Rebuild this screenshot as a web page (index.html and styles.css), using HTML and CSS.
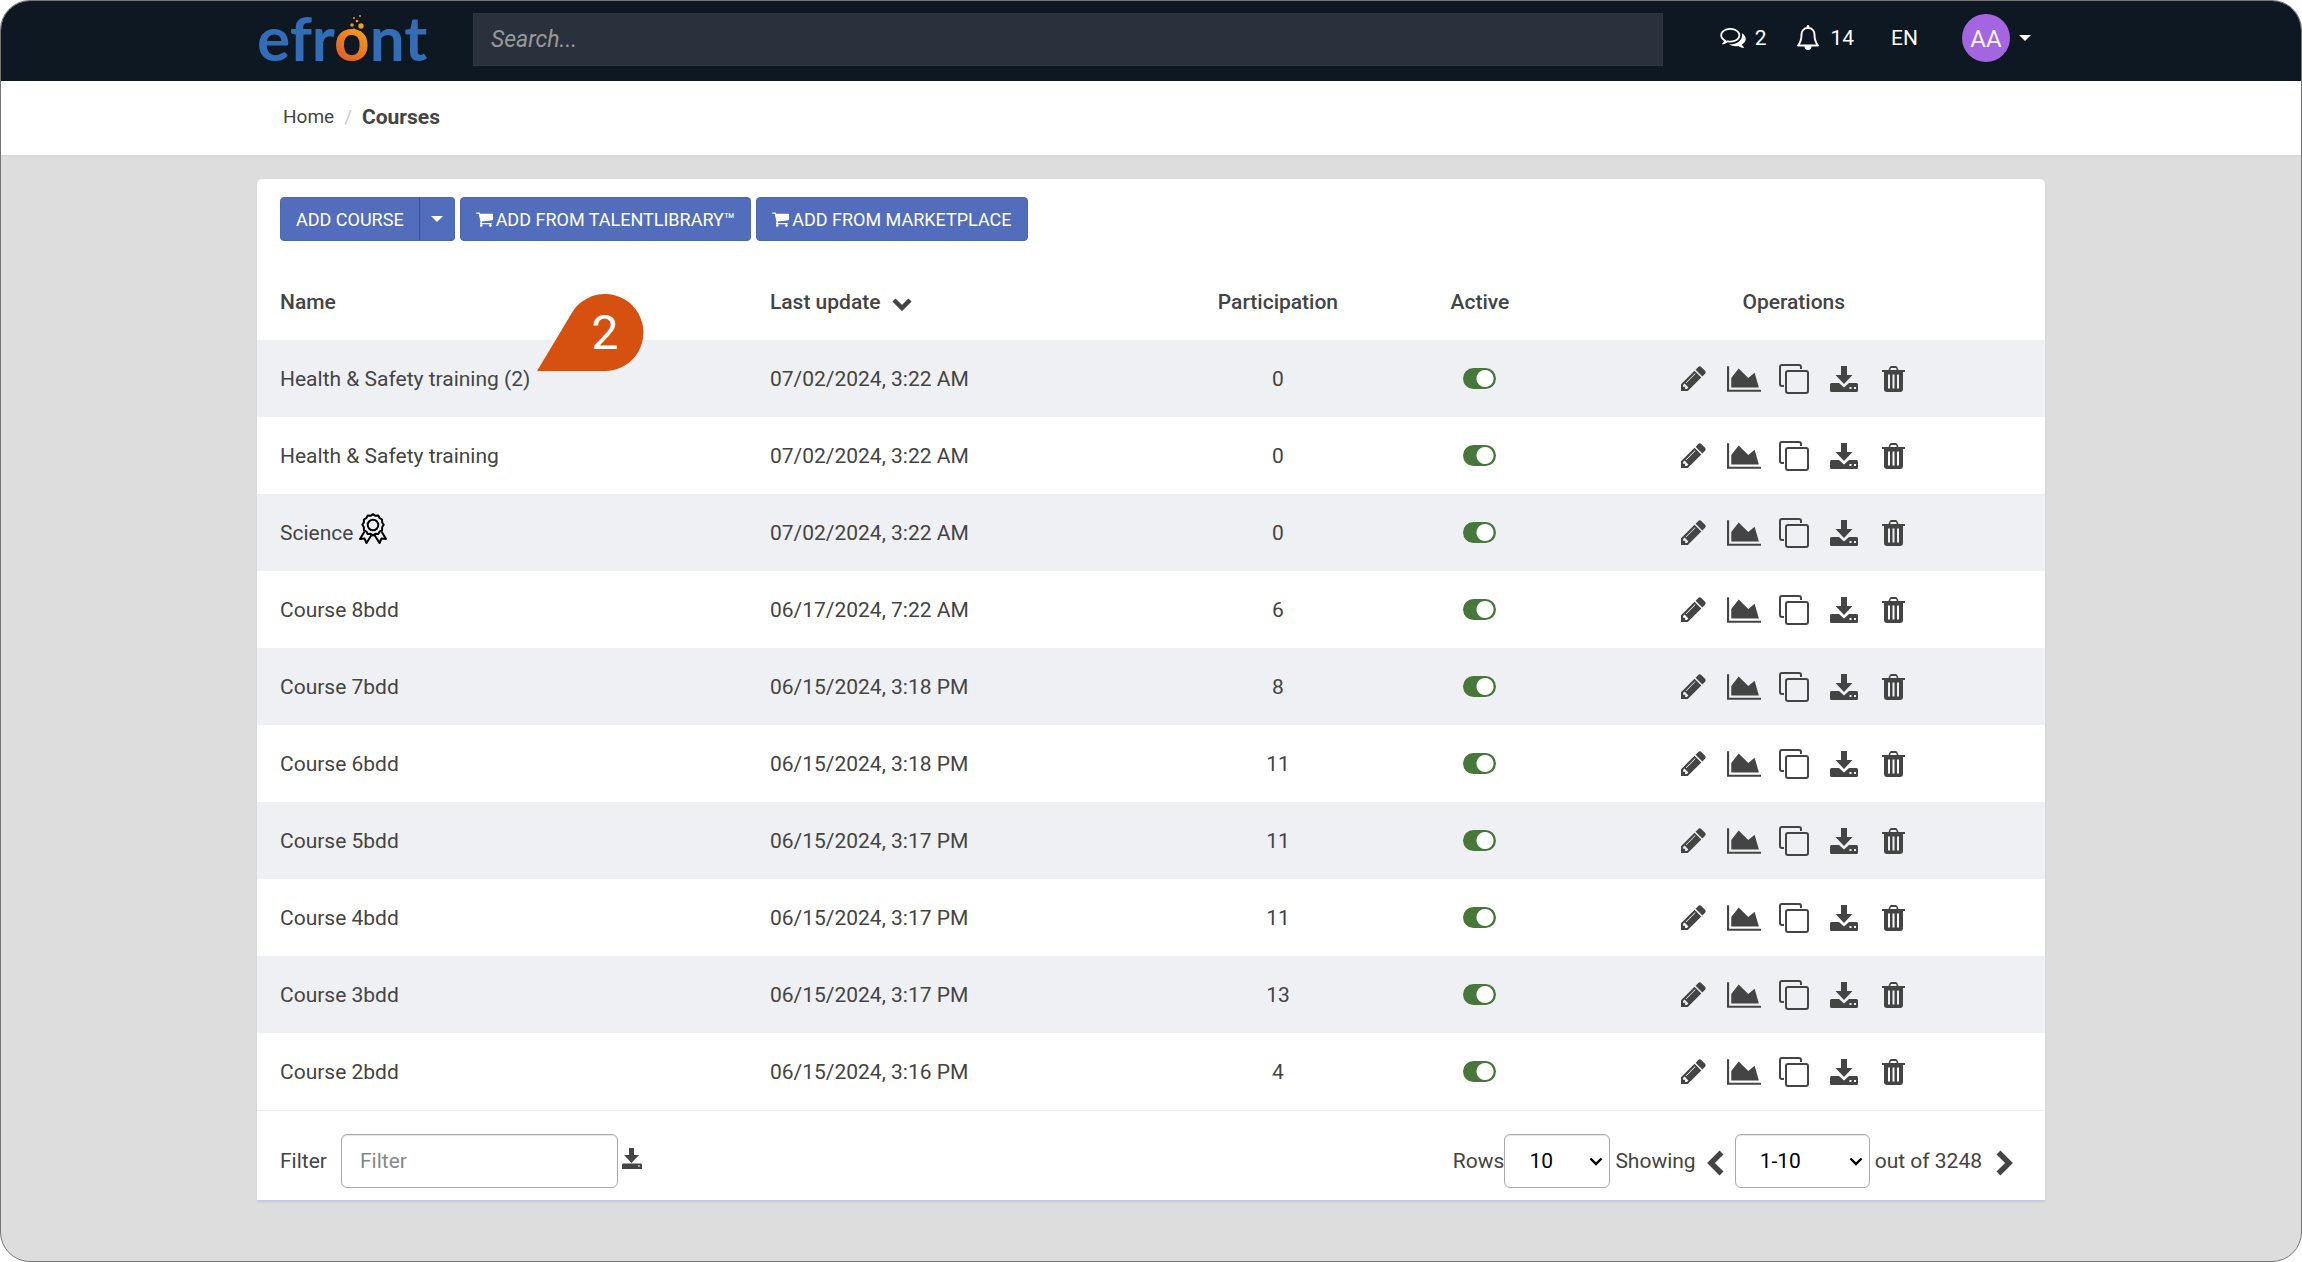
FILE: index.html
```html
<!DOCTYPE html>
<html lang="en">
  <head>
    <meta charset="UTF-8" />
    <meta name="viewport" content="width=device-width, initial-scale=1.0" />
    <title>Courses</title>
    <link rel="stylesheet" href="styles.css">
  </head>

  <body>
    <!-- Icon sprite -->
    <svg class="sprite" aria-hidden="true">
      <symbol id="i-pencil" viewBox="128 128 1536 1536">
        <path d="M491 1536l91-91-235-235-91 91v107h128v128h107zm523-928q0-22-22-22-10 0-17 7l-542 542q-7 7-7 17 0 22 22 22 10 0 17-7l542-542q7-7 7-17zm-54-192l416 416-832 832h-416v-416zm683 96q0 53-37 90l-166 166-416-416 166-165q36-38 90-38 53 0 91 38l235 234q37 39 37 91z" />
      </symbol>
      <symbol id="i-chart" viewBox="0 128 2048 1536">
        <path d="M2048 1536v128h-2048v-1536h128v1408h1920zm-384-1024l256 896h-1664v-576l448-576 576 576z" />
      </symbol>
      <symbol id="i-copy" viewBox="0 0 30 30">
        <path d="M5 22H3a2 2 0 0 1-2-2V3a2 2 0 0 1 2-2h17a2 2 0 0 1 2 2v2" fill="none" stroke="currentColor" stroke-width="2" />
        <rect x="7" y="7" width="22" height="22" rx="2" fill="none" stroke="currentColor" stroke-width="2" />
      </symbol>
      <symbol id="i-download" viewBox="0 0 28 26">
        <path d="M11 0h6v9h5.500l-8.500 9-8.500-9h5.500z" />
        <path fill-rule="evenodd" d="M1.500 17h7.500l5 4.500 5-4.500h7.500a1.500 1.500 0 0 1 1.500 1.500v6a1.500 1.500 0 0 1-1.500 1.500h-25a1.500 1.500 0 0 1-1.500-1.500v-6a1.500 1.500 0 0 1 1.500-1.500zM19.500 21v2h2v-2zM24 21v2h2v-2z" />
      </symbol>
      <symbol id="i-trash" viewBox="0 0 23 26">
        <path fill-rule="evenodd" d="M0 4h6.500l1-2.600a2 2 0 0 1 2-1.400h4a2 2 0 0 1 2 1.400l1 2.600h6.500v2h-2v17a3 3 0 0 1-3 3h-13a3 3 0 0 1-3-3v-17h-2zM8.200 4h6.600l-.7-2h-5.200zM6 8.500v14h2v-14zM10.500 8.500v14h2v-14zM15 8.500v14h2v-14z" />
      </symbol>
      <symbol id="i-save" viewBox="0 0 20 21">
        <path d="M7 0h5v7h5l-7.500 8-7.500-8h5z" />
        <path fill-rule="evenodd" d="M1 15.500h18l1 1v4.500h-20v-4.500zM16 17.500v1h2v-1z" />
      </symbol>
      <symbol id="i-cart" viewBox="64 128 1664 1536">
        <path d="M704 1536q0 52-38 90t-90 38-90-38-38-90 38-90 90-38 90 38 38 90zm896 0q0 52-38 90t-90 38-90-38-38-90 38-90 90-38 90 38 38 90zm128-1088v512q0 24-16.500 42.500t-40.500 21.500l-1044 122q13 60 13 70 0 16-24 64h920q26 0 45 19t19 45-19 45-45 19h-1024q-26 0-45-19t-19-45q0-11 8-31.500t16-36 21.500-40 15.500-29.500l-177-823h-204q-26 0-45-19t-19-45 19-45 45-19h256q16 0 28.500 6.500t19.500 15.500 13 24.500 8 26 5.500 29.500 4.500 26h1201q26 0 45 19t19 45z" />
      </symbol>
      <symbol id="i-comments" viewBox="0 256 1792 1408">
        <path d="M704 384q-153 0-286 52t-211.500 141-78.500 191q0 82 53 158t149 132l97 56-35 84q34-20 62-39l44-31 53 10q78 14 153 14 153 0 286-52t211.500-141 78.500-191-78.500-191-211.500-141-286-52zm0-128q191 0 353.500 68.500t256.500 186.500 94 257-94 257-256.500 186.500-353.500 68.500q-86 0-176-16-124 88-278 128-36 9-86 16h-3q-11 0-20.500-8t-11.500-21q-1-3-1-6.500t.5-6.500 2-6l2.500-5 3.500-5.500 4-5 4.500-5 4-4.500q5-6 23-25t26-29.500 22.500-29 25-38.500 20.500-44q-124-72-195-177t-71-224q0-139 94-257t256.500-186.500 353.500-68.500zm822 1169q10 24 20.500 44t25 38.500 22.500 29 26 29.500 23 25q1 1 4 4.500t4.500 5 4 5 3.500 5.500l2.500 5 2 6 .5 6.500-1 6.500q-3 14-13 22t-22 7q-50-7-86-16-154-40-278-128-90 16-176 16-271 0-472-132 58 4 88 4 161 0 309-45t264-129q125-92 192-212t67-254q0-77-23-152 129 71 204 178t75 230q0 120-71 224.500t-195 176.500z" />
      </symbol>
      <symbol id="i-bell" viewBox="0 0 26 26">
        <path d="M13 3c-4.500 0-6.500 3.200-6.500 6.800 0 5.200-1.200 8-3.500 10.700h20c-2.300-2.700-3.500-5.500-3.500-10.700 0-3.600-2-6.800-6.500-6.800z" fill="none" stroke="currentColor" stroke-width="1.900" stroke-linejoin="round" />
        <path d="M11.700 1.300a1.300 1.300 0 0 1 2.600 0v2h-2.600zM9.500 21h7a3.500 4 0 0 1-7 0z" />
      </symbol>
      <symbol id="i-down" viewBox="0 0 20 13">
        <path d="M2 2l8 8 8-8" fill="none" stroke="currentColor" stroke-width="4.500" />
      </symbol>
      <symbol id="i-left" viewBox="0 0 17 26">
        <path d="M14.500 2.500l-10.500 10.500 10.500 10.500" fill="none" stroke="currentColor" stroke-width="5.500" />
      </symbol>
      <symbol id="i-right" viewBox="0 0 17 26">
        <path d="M2.500 2.500l10.500 10.500-10.500 10.500" fill="none" stroke="currentColor" stroke-width="5.500" />
      </symbol>
      <symbol id="i-chevron" viewBox="0 0 14 9">
        <path d="M1.500 1.500l5.500 5.500 5.500-5.500" fill="none" stroke="currentColor" stroke-width="2.400" />
      </symbol>
      <symbol id="i-caret" viewBox="0 0 12 6">
        <path d="M0 0h12l-6 6z" />
      </symbol>
      <symbol id="i-award" viewBox="0 0 28 31">
        <g fill="none" stroke="currentColor" stroke-width="2" stroke-linejoin="round">
          <path d="M14 1.200l2.400 1.600 2.900-.3 1.300 2.600 2.500 1.400v2.900l1.600 2.400-1.600 2.400v2.900l-2.500 1.400-1.300 2.600-2.900-.3-2.400 1.600-2.400-1.600-2.900.3-1.300-2.600-2.500-1.400v-2.900l-1.600-2.400 1.600-2.400v-2.900l2.500-1.400 1.300-2.600 2.900.3z" />
          <circle cx="14" cy="12" r="5.300" />
          <path d="M5.500 18.500l-4.500 7.500 4.500-.5 2 4.500 5-8M22.500 18.500l4.500 7.500-4.500-.5-2 4.500-5-8" />
        </g>
      </symbol>
    </svg>

    <div class="page">
      <header class="navbar">
        <div class="container navbar-inner">
          <a href="#" class="logo" aria-label="efront">
            <svg viewBox="0 0 170 76" width="170" height="76">
              <defs>
                <linearGradient id="flame" gradientUnits="userSpaceOnUse" x1="82" y1="60" x2="104" y2="28">
                  <stop offset="0" stop-color="#e0592a" />
                  <stop offset="1" stop-color="#f29a22" />
                </linearGradient>
              </defs>
              <text x="0" y="60" class="logo-text">efr<tspan fill="url(#flame)">o</tspan>nt</text>
              <g fill="url(#flame)">
                <path d="M85 34l5-3 1-2 3 2 3-4 3 4 4-1 1 3 3 4-12-3z" />
                <circle cx="95" cy="24" r="1.800" />
                <circle cx="104" cy="25" r="2.700" />
                <circle cx="100" cy="20" r="1.300" />
                <circle cx="97" cy="17" r="1" />
                <circle cx="103" cy="15" r="1" />
              </g>
            </svg>
          </a>
          <input type="search" class="search" placeholder="Search..." aria-label="Search" />
          <nav class="menu">
            <a href="#" class="menu-item" aria-label="2 messages"><svg class="icon comments"><use href="#i-comments" /></svg>2</a>
            <a href="#" class="menu-item" aria-label="14 notifications"><svg class="icon bell"><use href="#i-bell" /></svg>14</a>
            <a href="#" class="menu-item lang">EN</a>
            <a href="#" class="menu-item user"><span class="avatar">AA</span><svg class="icon caret"><use href="#i-caret" /></svg></a>
          </nav>
        </div>
      </header>

      <div class="breadcrumb">
        <div class="container breadcrumb-inner">
          <a href="#">Home</a>
          <span class="slash">/</span>
          <strong>Courses</strong>
        </div>
      </div>

      <main class="container">
        <div class="card">
          <div class="toolbar">
            <div class="btn-group">
              <button type="button" class="btn">ADD COURSE</button>
              <button type="button" class="btn btn-split" aria-label="More options"><svg class="icon caret"><use href="#i-caret" /></svg></button>
            </div>
            <button type="button" class="btn"><svg class="icon cart"><use href="#i-cart" /></svg>ADD FROM TALENTLIBRARY™</button>
            <button type="button" class="btn"><svg class="icon cart"><use href="#i-cart" /></svg>ADD FROM MARKETPLACE</button>
          </div>

          <table class="grid">
            <colgroup>
              <col class="col-name" />
              <col class="col-date" />
              <col class="col-part" />
              <col class="col-active" />
              <col class="col-ops" />
            </colgroup>
            <thead>
              <tr>
                <th>Name</th>
                <th>Last update <svg class="icon sort"><use href="#i-down" /></svg></th>
                <th class="center">Participation</th>
                <th class="center">Active</th>
                <th class="center">Operations</th>
              </tr>
            </thead>
            <tbody id="courses"></tbody>
          </table>

          <div class="footer">
            <label for="filter" class="filter-label">Filter</label>
            <input type="text" id="filter" class="field filter" placeholder="Filter" />
            <button type="button" class="icon-btn" aria-label="Export"><svg class="icon save"><use href="#i-save" /></svg></button>
            <div class="pager">
              <label for="rows">Rows</label>
              <div class="select">
                <select id="rows" class="field rows"><option>10</option></select>
                <svg class="icon chevron"><use href="#i-chevron" /></svg>
              </div>
              <label for="range" class="showing">Showing</label>
              <button type="button" class="icon-btn prev" aria-label="Previous"><svg class="icon arrow"><use href="#i-left" /></svg></button>
              <div class="select">
                <select id="range" class="field range"><option>1-10</option></select>
                <svg class="icon chevron"><use href="#i-chevron" /></svg>
              </div>
              <span class="total">out of 3248</span>
              <button type="button" class="icon-btn next" aria-label="Next"><svg class="icon arrow"><use href="#i-right" /></svg></button>
            </div>
          </div>
        </div>
      </main>
    </div>

    <script src="script.js"></script>
  </body>
</html>
```

FILE: styles.css
```css
* {
  box-sizing: border-box;
}

body {
  margin: 0;
  background-color: white;
  font-family: Roboto, "Liberation Sans", sans-serif;
  font-size: 21px;
  line-height: 30px;
  color: #444;
}

a {
  color: inherit;
  text-decoration: none;
}

button,
input,
select {
  font-family: inherit;
  font-size: inherit;
}

.sprite {
  position: absolute;
  width: 0;
  height: 0;
}

.icon {
  display: block;
  fill: currentColor;
}

.page {
  min-height: 100vh;
  border: 1px solid #767676;
  border-radius: 30px;
  background-color: #ddd;
  overflow: hidden;
}

.container {
  width: 100%;
  max-width: 1788px;
  margin: 0 auto;
}

/* Top bar */
.navbar {
  background-color: #0e1823;
  color: white;
}

.navbar-inner {
  display: flex;
  align-items: center;
  height: 80px;
  padding-bottom: 4px;
}

.logo {
  display: flex;
  margin-right: 46px;
}

.logo-text {
  font-family: Lato, sans-serif;
  font-size: 62px;
  font-weight: 700;
  fill: #326db5;
}

.search {
  flex: 1;
  min-width: 0;
  height: 53px;
  padding: 0 17px;
  border: 1px solid #2e3741;
  border-radius: 0;
  background-color: #28313c;
  color: white;
  font-size: 23px;
  appearance: none;
}

.search::placeholder {
  color: #999;
  font-style: italic;
}

.menu {
  display: flex;
  align-items: center;
  gap: 29px;
  padding: 0 14px 2px 57px;
}

.menu-item {
  display: flex;
  align-items: center;
  gap: 9px;
}

.lang {
  padding: 0 8px;
}

.user {
  margin-left: 7px;
}

.avatar {
  width: 48px;
  height: 48px;
  border-radius: 50%;
  background-color: #a366e0;
  color: #eee;
  font-size: 24px;
  line-height: 50px;
  text-align: center;
}

.comments {
  width: 26px;
  height: 20px;
}

.bell {
  width: 26px;
  height: 26px;
}

.caret {
  width: 12px;
  height: 6px;
}

/* Breadcrumb */
.breadcrumb {
  background-color: white;
  border-bottom: 1px solid #d5d5d5;
}

.breadcrumb-inner {
  display: flex;
  align-items: center;
  gap: 10px;
  height: 74px;
  padding: 0 26px 2px;
  font-size: 19px;
}

.breadcrumb strong {
  font-size: 21px;
  font-weight: 700;
}

.slash {
  color: #ccc;
}

/* Card */
.card {
  margin: 23px 0;
  border-radius: 5px 5px 0 0;
  background-color: white;
  box-shadow: 0 2px 2px #c5cade;
}

.toolbar {
  display: flex;
  gap: 5px;
  padding: 18px 23px 23px;
}

.btn-group {
  display: flex;
}

.btn {
  display: flex;
  align-items: center;
  gap: 3px;
  height: 44px;
  padding: 0 15px;
  border: 1px solid #4a66b5;
  border-radius: 4px;
  background-color: #526dbc;
  color: white;
  font-size: 18px;
  cursor: pointer;
}

.btn-group .btn:first-child {
  border-radius: 4px 0 0 4px;
}

.btn-group .btn-split {
  padding: 0 11px;
  border-left: 1px solid #36509b;
  border-radius: 0 4px 4px 0;
  margin-left: -1px;
}

.cart {
  width: 17px;
  height: 16px;
}

/* Course table */
.grid {
  width: 100%;
  table-layout: fixed;
  border-collapse: collapse;
}

.col-name {
  width: 27.4%;
}

.col-date {
  width: 21.9%;
}

.col-part {
  width: 15.6%;
}

.col-active {
  width: 7%;
}

.col-ops {
  width: 28.1%;
}

.grid th,
.grid td {
  height: 77px;
  padding: 0 0 0 23px;
  text-align: left;
}

.grid th {
  height: 76px;
  font-weight: 500;
}

.grid .center {
  padding: 0;
  text-align: center;
}

.grid tbody tr:nth-child(odd) {
  background-color: #eff0f4;
}

.sort {
  display: inline-block;
  width: 20px;
  height: 13px;
  margin-left: 6px;
  vertical-align: -2px;
}

.course {
  position: relative;
}

.award {
  display: inline-block;
  width: 28px;
  height: 31px;
  margin: -8px 0;
  color: black;
  vertical-align: 4px;
}

.toggle {
  display: block;
  width: 33px;
  height: 21px;
  margin: 0 auto;
  border-radius: 11px;
  background: radial-gradient(circle at 22px 50%, white 8px, #47773a 9px);
  appearance: none;
}

.ops {
  display: flex;
  justify-content: center;
}

.icon-btn {
  display: flex;
  align-items: center;
  justify-content: center;
  padding: 0;
  border: none;
  background: none;
  color: #444;
  cursor: pointer;
}

.ops .icon-btn {
  width: 50px;
  height: 30px;
}

.pencil {
  width: 25px;
  height: 25px;
}

.chart {
  width: 34px;
  height: 26px;
}

.copy {
  width: 30px;
  height: 30px;
}

.download {
  width: 28px;
  height: 26px;
}

.trash {
  width: 23px;
  height: 26px;
}

/* Step marker over the table */
.marker {
  position: absolute;
  left: 100%;
  bottom: 20px;
  width: 108px;
  height: 77px;
  margin-left: 7px;
}

.marker path {
  fill: #d65110;
}

.marker text {
  fill: white;
  font-family: Roboto, sans-serif;
  font-size: 48px;
}

/* Footer */
.footer {
  display: flex;
  align-items: center;
  padding: 23px 32px 12px 23px;
  border-top: 1px solid #eee;
}

.filter-label {
  margin-right: 14px;
}

.field {
  height: 54px;
  border: 1px solid #aaa;
  border-radius: 6px;
  background-color: white;
  box-shadow: inset 0 1px 1px rgba(0, 0, 0, 0.1);
}

.filter {
  width: 277px;
  padding: 0 18px;
  margin-right: 4px;
}

.filter::placeholder {
  color: #888;
}

.save {
  width: 20px;
  height: 21px;
  margin-bottom: 5px;
}

.pager {
  display: flex;
  align-items: center;
  margin-left: auto;
}

.select {
  position: relative;
}

.select select {
  display: block;
  padding: 0 24px;
  color: black;
  appearance: none;
}

.chevron {
  position: absolute;
  top: 23px;
  right: 7px;
  width: 14px;
  height: 9px;
  color: black;
  pointer-events: none;
}

.rows {
  width: 106px;
}

.range {
  width: 135px;
}

.showing {
  margin-left: 5px;
}

.prev {
  margin: 0 11px;
}

.total {
  margin-left: 5px;
}

.next {
  margin-left: 14px;
}

.arrow {
  width: 17px;
  height: 26px;
  margin-top: 4px;
}
```

FILE: script.js
```js
const courses = [
  { name: "Health & Safety training (2)", date: "07/02/2024, 3:22 AM", count: 0, step: 2 },
  { name: "Health & Safety training", date: "07/02/2024, 3:22 AM", count: 0 },
  { name: "Science", date: "07/02/2024, 3:22 AM", count: 0, award: true },
  { name: "Course 8bdd", date: "06/17/2024, 7:22 AM", count: 6 },
  { name: "Course 7bdd", date: "06/15/2024, 3:18 PM", count: 8 },
  { name: "Course 6bdd", date: "06/15/2024, 3:18 PM", count: 11 },
  { name: "Course 5bdd", date: "06/15/2024, 3:17 PM", count: 11 },
  { name: "Course 4bdd", date: "06/15/2024, 3:17 PM", count: 11 },
  { name: "Course 3bdd", date: "06/15/2024, 3:17 PM", count: 13 },
  { name: "Course 2bdd", date: "06/15/2024, 3:16 PM", count: 4 },
];

const operations = {
  pencil: "Edit",
  chart: "Reports",
  copy: "Duplicate",
  download: "Export",
  trash: "Delete",
};

const opsHtml = Object.keys(operations)
  .map(
    (op) =>
      `<button type="button" class="icon-btn" aria-label="${operations[op]}"><svg class="icon ${op}"><use href="#i-${op}" /></svg></button>`
  )
  .join("");

// Orange drop pointing at the course name
function marker(step) {
  return `<svg class="marker" viewBox="0 0 108 77">
    <path d="M0 77L36 17A38.500 38.500 0 1 1 69 77z" />
    <text x="68" y="55" text-anchor="middle">${step}</text>
  </svg>`;
}

document.querySelector("#courses").innerHTML = courses
  .map((course) => {
    const name = course.name.replace("&", "&amp;");
    return `<tr>
      <td>
        <a href="#" class="course">${name}${course.step ? marker(course.step) : ""}</a>
        ${course.award ? '<svg class="icon award"><use href="#i-award" /></svg>' : ""}
      </td>
      <td>${course.date}</td>
      <td class="center">${course.count}</td>
      <td class="center"><input type="checkbox" class="toggle" aria-label="${name} active" checked /></td>
      <td class="center"><div class="ops">${opsHtml}</div></td>
    </tr>`;
  })
  .join("");
```
